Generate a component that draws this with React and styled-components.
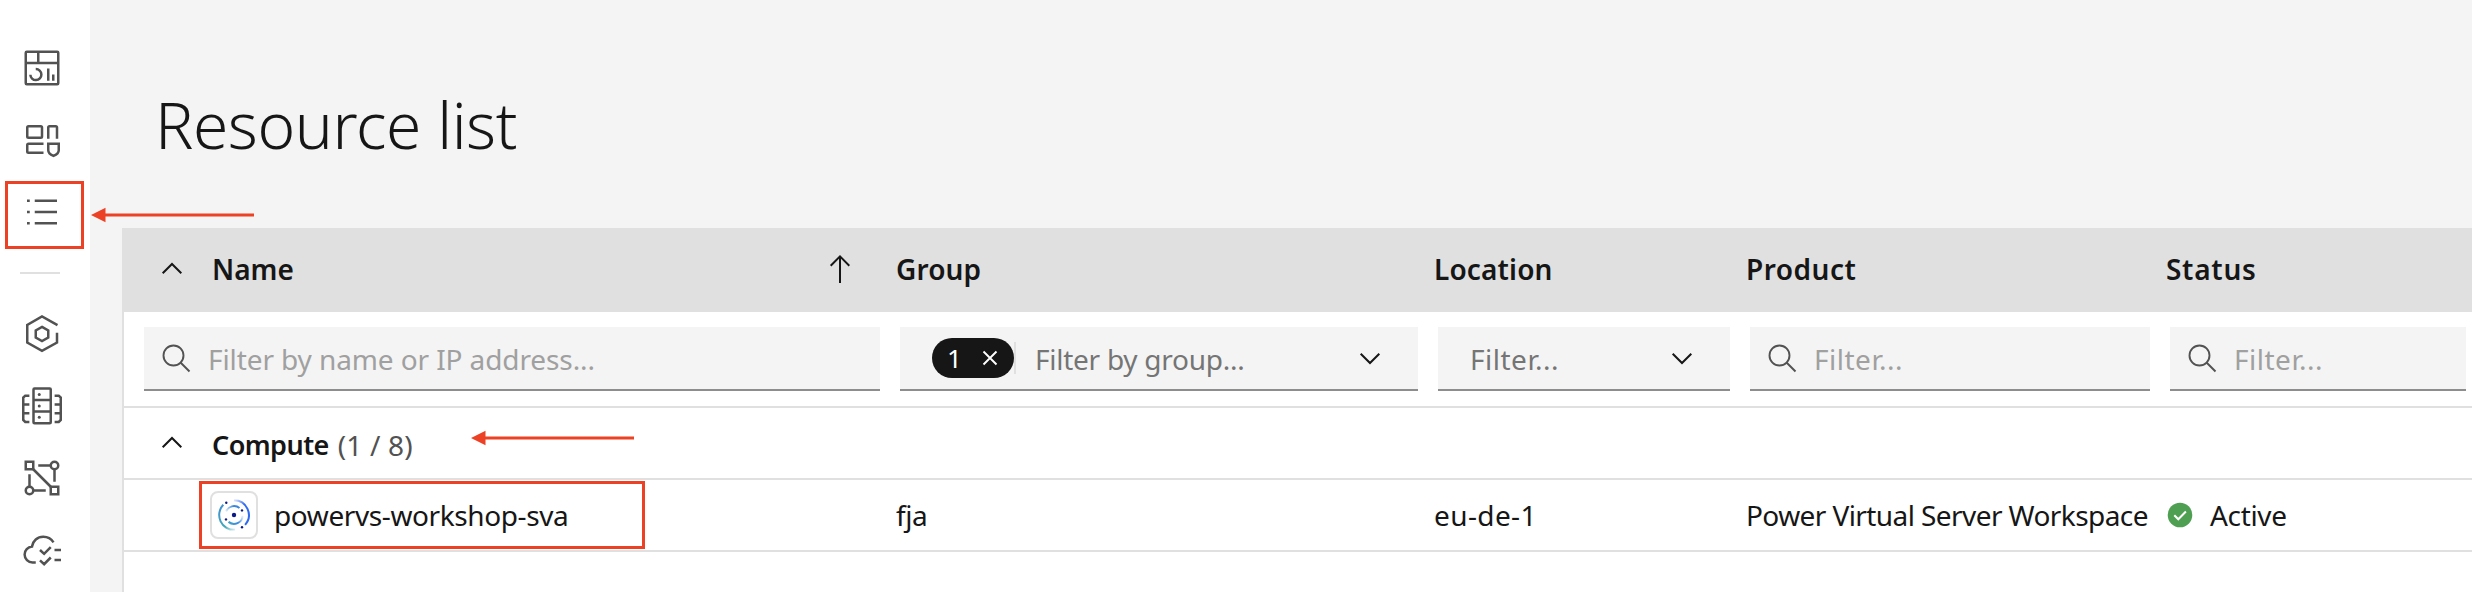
import React from 'react';
import styled, { createGlobalStyle } from 'styled-components';

const Global = createGlobalStyle`
  * { box-sizing: border-box; }
  body {
    margin: 0;
    background: #f4f4f4;
    font-family: "Noto Sans", sans-serif;
    font-size: 28px;
    line-height: 38px;
    color: #161616;
    overflow: hidden;
  }
  svg { display: block; flex: none; }
`;

const Shell = styled.div`
  position: relative;
  display: flex;
  width: 2472px;
  height: 592px;
  overflow: hidden;
`;

const Rail = styled.nav`
  width: 90px;
  flex: none;
  background: #fff;
  display: flex;
  flex-direction: column;
  gap: 32px;
  padding: 48px 0 0 22px;
`;

const RailRule = styled.hr`
  width: 40px;
  height: 2px;
  margin: 8px 0 8px -2px;
  border: 0;
  background: #e0e0e0;
`;

const RailIcon = styled.svg.attrs({ viewBox: '0 0 32 32', width: 40, height: 40 })`
  fill: none;
  stroke: #525252;
  stroke-width: 2;
`;

const Main = styled.main`
  flex: 1;
  min-width: 0;
  padding-left: 32px;
`;

const Title = styled.h1`
  margin: 0;
  height: 228px;
  padding: 85px 0 0 33px;
  font-size: 64px;
  font-weight: 300;
  line-height: 80px;
  letter-spacing: -0.43px;
`;

const Table = styled.section`
  height: 364px;
  border-left: 2px solid #e0e0e0;
  background: #fff;
`;

const Row = styled.div`
  display: grid;
  grid-template-columns: 756px 538px 312px 420px 1fr;
  align-items: center;
  padding-left: 16px;
  height: ${(p) => p.$height || 72}px;
  border-bottom: 2px solid #e0e0e0;
  background: ${(p) => (p.$head ? '#e0e0e0' : '#fff')};
`;

const Cell = styled.div`
  display: flex;
  align-items: center;
  white-space: nowrap;
  padding-left: ${(p) => p.$inset || 0}px;
  letter-spacing: ${(p) => p.$track || 0}px;
`;

const Heading = styled(Cell)`
  font-weight: 600;
`;

const Label = styled.span`
  flex: 1;
  margin-left: 24px;
`;

const GroupName = styled.strong`
  margin: 3px 0 0 24px;
  font-size: 27px;
  font-weight: 600;
  letter-spacing: -0.56px;
`;

const Count = styled.span`
  margin: 3px 0 0 9px;
  color: #525252;
  letter-spacing: 0.18px;
`;

const Field = styled.div`
  display: flex;
  align-items: center;
  height: 64px;
  margin: 0 ${(p) => p.$end || 16}px 0 4px;
  padding: 0 ${(p) => (p.$select ? 32 : 16)}px 0 ${(p) => (p.$select ? 32 : 16)}px;
  background: #f4f4f4;
  border-bottom: 2px solid #8d8d8d;
  white-space: nowrap;
`;

const Placeholder = styled.span`
  flex: 1;
  padding-top: 2px;
  margin-left: ${(p) => p.$gap || 0}px;
  color: ${(p) => (p.$dark ? '#757575' : '#a0a0a0')};
  letter-spacing: ${(p) => p.$track || 0}px;
`;

const Pill = styled.span`
  display: flex;
  align-items: center;
  justify-content: space-between;
  width: 82px;
  height: 40px;
  padding: 0 16px 0 15px;
  border-radius: 20px;
  background: #161616;
  color: #fff;
  font-size: 26px;
`;

const PillRule = styled.span`
  width: 2px;
  height: 32px;
  background: #e0e0e0;
`;

const Tile = styled.span`
  display: grid;
  place-items: center;
  width: 48px;
  height: 48px;
  margin-right: 16px;
  border: 2px solid #e0e0e0;
  border-radius: 8px;
`;

const StatusText = styled.span`
  margin-left: 16px;
  letter-spacing: -0.34px;
`;

const MarkBox = styled.div`
  position: absolute;
  left: ${(p) => p.$x}px;
  top: ${(p) => p.$y}px;
  width: ${(p) => p.$w}px;
  height: 68px;
  border: 3px solid #ec4125;
`;

const MarkArrow = styled.svg`
  position: absolute;
  left: ${(p) => p.$x}px;
  top: ${(p) => p.$y}px;
`;

const Chevron = ({ down }) => (
  <svg width="32" height="32" viewBox="0 0 32 32" fill="none" stroke="#161616" strokeWidth="2">
    <path d={down ? 'M6.7 11.7 16 21l9.3-9.3' : 'M6.7 20.3 16 11l9.3 9.3'} />
  </svg>
);

const Search = () => (
  <svg width="32" height="32" viewBox="0 0 32 32" fill="none" stroke="#525252" strokeWidth="1.9">
    <circle cx="13.500" cy="13.500" r="10" />
    <path d="m20.500 20.500 9 9" />
  </svg>
);

const SortUp = () => (
  <svg width="32" height="32" viewBox="0 0 32 32" fill="none" stroke="#161616" strokeWidth="2">
    <path d="M16 30V3.5M6.7 12.7 16 3.4l9.3 9.3" />
  </svg>
);

const Arrow = ({ x, y, length }) => (
  <MarkArrow $x={x} $y={y} width={length} height="16" fill="#ec4125">
    <path d={`M0 8 14.5 0.7V6.5H${length}V9.5H14.5V15.3Z`} />
  </MarkArrow>
);

const WorkspaceLogo = () => (
  <svg width="32" height="32" viewBox="0 0 32 32" fill="none" strokeWidth="2">
    <defs>
      <linearGradient id="right" x1="16" y1="0" x2="24" y2="8" gradientUnits="userSpaceOnUse">
        <stop stopColor="#2f6df0" stopOpacity="0.1" />
        <stop offset="1" stopColor="#2f6bf2" />
      </linearGradient>
      <linearGradient id="left" x1="4" y1="8" x2="18" y2="31" gradientUnits="userSpaceOnUse">
        <stop stopColor="#3f93d0" />
        <stop offset="0.7" stopColor="#45a9b8" />
        <stop offset="1" stopColor="#45a9b8" stopOpacity="0.1" />
      </linearGradient>
      <linearGradient id="upper" x1="8" y1="13" x2="20" y2="8" gradientUnits="userSpaceOnUse">
        <stop stopColor="#3f93d0" stopOpacity="0.15" />
        <stop offset="0.7" stopColor="#3a86dd" />
      </linearGradient>
      <linearGradient id="lower" x1="12" y1="24" x2="25" y2="17" gradientUnits="userSpaceOnUse">
        <stop stopColor="#409fca" />
        <stop offset="0.5" stopColor="#3a8ae0" />
        <stop offset="1" stopColor="#3a8ae0" stopOpacity="0.1" />
      </linearGradient>
    </defs>
    <path stroke="url(#right)" d="M16 1.2A14.8 14.8 0 0 1 27.1 25.8" />
    <path stroke="url(#left)" d="M5.3 5.8A14.8 14.8 0 0 0 17 30.8" />
    <path stroke="url(#upper)" d="M8 12.4A8.8 8.8 0 0 1 21.5 9" />
    <path stroke="url(#lower)" d="M10.5 22.9A8.8 8.8 0 0 0 24.8 16.7" />
    <g fill="#0b1a86">
      <circle cx="16" cy="16" r="2.2" />
      <circle cx="8.3" cy="3.7" r="1.2" />
      <circle cx="24" cy="11.4" r="1.2" />
      <circle cx="8" cy="20.4" r="1.2" />
      <circle cx="24" cy="28.2" r="1.2" />
    </g>
  </svg>
);

export default function App() {
  return (
    <>
      <Global />
      <Shell>
        <Rail>
          <RailIcon>
            <rect x="3" y="3" width="26" height="26" rx="0.8" />
            <path d="M3 12H29M13 3V12M11 16.9A4.4 4.4 0 1 1 6.7 21.4M21 16.3V26.2M25 21.2V26.2" />
          </RailIcon>
          <RailIcon>
            <rect x="4.2" y="5" width="11.8" height="9.2" rx="1" />
            <path d="M21 14.9V6q0-1 1-1h5q1 0 1 1v8.9M17.2 18.9H5.2q-1 0-1 1v5.3q0 1 1 1H17.2M21 18.9h8.4v5.2q0 2.9-4.2 4.6-4.2-1.7-4.2-4.6z" />
          </RailIcon>
          <RailIcon>
            <path d="M10.2 7H28M10.2 16H28M10.2 24.9H28M4 7H6.2M4 16H6.2M4 24.9H6.2" />
          </RailIcon>
          <RailRule />
          <RailIcon>
            <path d="M28.4 8.9 16 2 4.2 8.8V22.8L16 29.5 28 22.8V15" />
            <path d="m16 10.3 5 2.8v5.8l-5 2.8-5-2.8v-5.8z" />
          </RailIcon>
          <RailIcon>
            <rect x="9.2" y="2" width="13.8" height="27.7" rx="0.8" />
            <path d="M9 11.2H23M9 20.4H23" />
            <path d="M5.9 7.7H2.6L1 9.3V27.2L2.6 28.8H5.9M1 14.8H5.9M1 21.8H5.9M26.1 7.7H29.4L31 9.3V27.2L29.4 28.8H26.1M31 14.8H26.1M31 21.8H26.1" />
            <g fill="#525252" stroke="none">
              <circle cx="13.8" cy="6.8" r="1.2" />
              <circle cx="13.8" cy="15.9" r="1.2" />
              <circle cx="13.8" cy="25" r="1.2" />
            </g>
          </RailIcon>
          <RailIcon>
            <rect x="3" y="3" width="6" height="6" />
            <rect x="23" y="23" width="6" height="6" />
            <circle cx="26" cy="6" r="3" />
            <circle cx="6" cy="26" r="3" />
            <path d="M13 6H23M26 9V18.9M6 13V23M9 26H19M9 9 23 23" />
          </RailIcon>
          <RailIcon>
            <path d="M25.2 9.9C23.4 7 20.4 5.4 17 5.4c-4.7 0-8.3 3.3-9 7.8C4.6 13.6 2.1 16.3 2.1 19.6c0 3.5 2.8 6.3 6.3 6.3H11M14.4 16l3.3 3.1L23 13.7M14.4 24.3l3.3 3.1L23 22M26 16H31.2M26 24H31.2" />
          </RailIcon>
        </Rail>
        <Main>
          <Title>Resource list</Title>
          <Table>
            <Row $head $height={84}>
              <Heading $inset={16}>
                <Chevron />
                <Label>Name</Label>
                <SortUp />
                <Cell $inset={40} />
              </Heading>
              <Heading $track={0.11}>Group</Heading>
              <Heading $track={0.15}>Location</Heading>
              <Heading $track={0.49}>Product</Heading>
              <Heading $track={0.72}>Status</Heading>
            </Row>
            <Row $height={96}>
              <Field>
                <Search />
                <Placeholder $gap={16} $track={-0.1}>Filter by name or IP address...</Placeholder>
              </Field>
              <Field $select>
                <Pill>
                  1
                  <svg width="16" height="16" viewBox="0 0 16 16" stroke="#fff" strokeWidth="1.9">
                    <path d="m1.5 1.5 13 13M14.5 1.5l-13 13" />
                  </svg>
                </Pill>
                <PillRule />
                <Placeholder $dark $gap={19} $track={-0.26}>Filter by group...</Placeholder>
                <Chevron down />
              </Field>
              <Field $select>
                <Placeholder $dark $track={0.5}>Filter...</Placeholder>
                <Chevron down />
              </Field>
              <Field>
                <Search />
                <Placeholder $gap={16} $track={0.5}>Filter...</Placeholder>
              </Field>
              <Field $end={6}>
                <Search />
                <Placeholder $gap={16} $track={0.5}>Filter...</Placeholder>
              </Field>
            </Row>
            <Row>
              <Cell $inset={16}>
                <Chevron />
                <GroupName>Compute</GroupName>
                <Count>(1 / 8)</Count>
              </Cell>
            </Row>
            <Row>
              <Cell $inset={70} $track={-0.4}>
                <Tile><WorkspaceLogo /></Tile>
                powervs-workshop-sva
              </Cell>
              <Cell $track={-0.48}>fja</Cell>
              <Cell $track={0.4}>eu-de-1</Cell>
              <Cell $track={-0.58}>Power Virtual Server Workspace</Cell>
              <Cell>
                <svg width="28" height="28" viewBox="0 0 28 28">
                  <circle cx="14" cy="14" r="12.3" fill="#4f9f52" />
                  <path d="m8.3 14.3 4 4 7.6-7.8" fill="none" stroke="#fff" strokeWidth="2" />
                </svg>
                <StatusText>Active</StatusText>
              </Cell>
            </Row>
          </Table>
        </Main>
        <MarkBox $x={5} $y={181} $w={79} />
        <MarkBox $x={199} $y={481} $w={446} />
        <Arrow x={91} y={207} length={163} />
        <Arrow x={471} y={430} length={163} />
      </Shell>
    </>
  );
}
